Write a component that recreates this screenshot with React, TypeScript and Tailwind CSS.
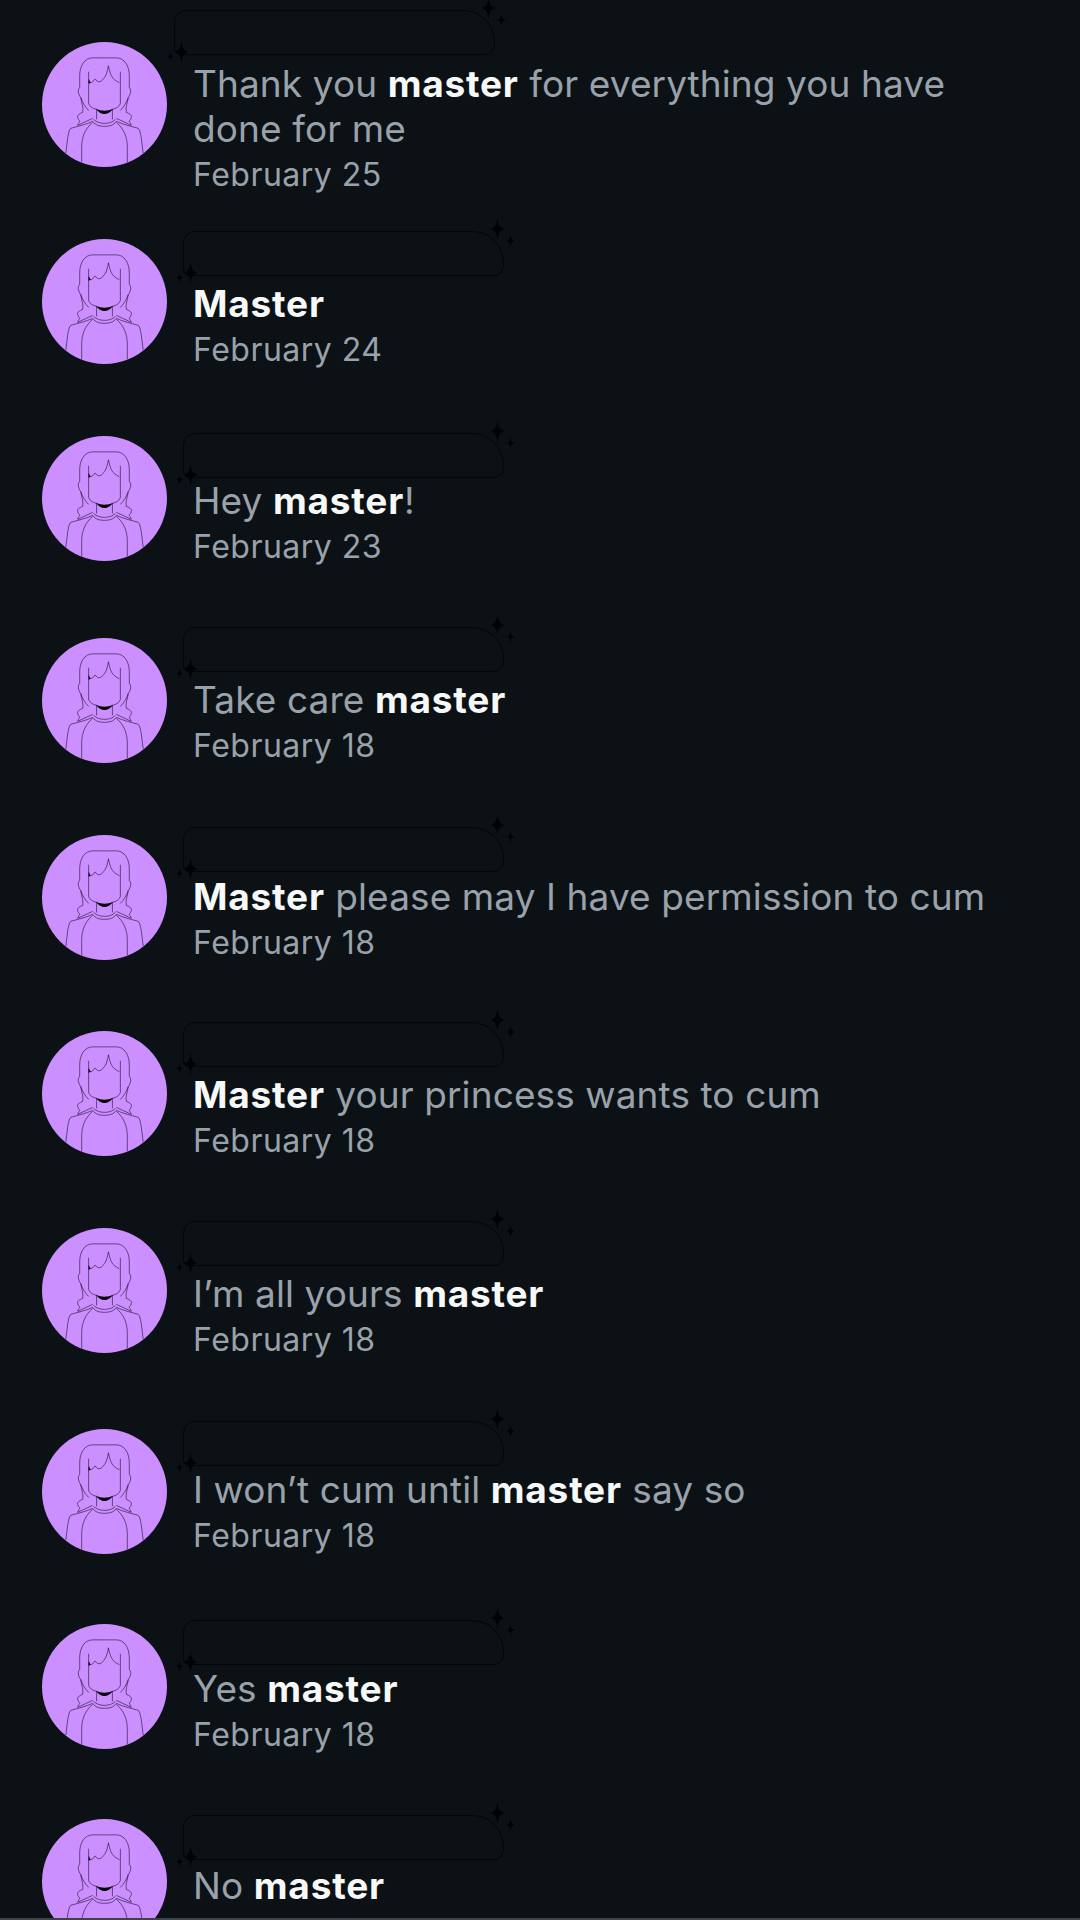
import React from 'react';

type Row = {
  text: React.ReactNode;
  date: string;
  height: string;
  avatar: string;
  bubble: string;
};

const B = ({ children }: { children: React.ReactNode }) => (
  <span className="font-bold tracking-[0.8px] text-[#f7f9f9]">{children}</span>
);

const rows: Row[] = [
  {
    text: (
      <>
        Thank you <B>master</B> for everything you have done for me
      </>
    ),
    date: 'February 25',
    height: 'h-[220px]',
    avatar: '-mt-[19px]',
    bubble: '-top-[51px] -left-[19px]',
  },
  { text: <B>Master</B>, date: 'February 24', height: 'h-[197px]', avatar: '-mt-[42px]', bubble: '-top-[50px] -left-[10px]' },
  {
    text: (
      <>
        Hey <B>master</B>!
      </>
    ),
    date: 'February 23',
    height: 'h-[199px]',
    avatar: '-mt-[42px]',
    bubble: '-top-[45px] -left-[10px]',
  },
  {
    text: (
      <>
        Take care <B>master</B>
      </>
    ),
    date: 'February 18',
    height: 'h-[197px]',
    avatar: '-mt-[39px]',
    bubble: '-top-[50px] -left-[10px]',
  },
  {
    text: (
      <>
        <B>Master</B> please may I have permission to cum
      </>
    ),
    date: 'February 18',
    height: 'h-[198px]',
    avatar: '-mt-[39px]',
    bubble: '-top-[47px] -left-[10px]',
  },
  {
    text: (
      <>
        <B>Master</B> your princess wants to cum
      </>
    ),
    date: 'February 18',
    height: 'h-[199px]',
    avatar: '-mt-[41px]',
    bubble: '-top-[50px] -left-[10px]',
  },
  {
    text: (
      <>
        I’m all yours <B>master</B>
      </>
    ),
    date: 'February 18',
    height: 'h-[196px]',
    avatar: '-mt-[43px]',
    bubble: '-top-[50px] -left-[10px]',
  },
  {
    text: (
      <>
        I won’t cum until <B>master</B> say so
      </>
    ),
    date: 'February 18',
    height: 'h-[199px]',
    avatar: '-mt-[38px]',
    bubble: '-top-[46px] -left-[10px]',
  },
  {
    text: (
      <>
        Yes <B>master</B>
      </>
    ),
    date: 'February 18',
    height: 'h-[197px]',
    avatar: '-mt-[42px]',
    bubble: '-top-[46px] -left-[10px]',
  },
  {
    text: (
      <>
        No <B>master</B>
      </>
    ),
    date: 'February 18',
    height: 'h-[197px]',
    avatar: '-mt-[44px]',
    bubble: '-top-[48px] -left-[10px]',
  },
];

// one half of the figure, mirrored for the other side
const AvatarSide = () => (
  <>
    <path d="M63 16H51C43 16 38 24 38 34V46C36 47 36 52 39 56C40 62 42 66 41 71C38 72 35 74 36 76C36 78 38 79 38 80C37 82 36 83 36 84" />
    <path d="M47 30V62C48 65 51 67 55 68" />
    <path d="M39 56C41 61 43 65 47 69" />
    <path d="M55 68V78" />
    <path d="M36 84L51 77" />
    <path d="M51 80C45 83 36 85 29 87C27 89 27 92 26 96L24 112" />
    <path d="M51 81C44 87 40 95 40 106V122" />
    <path d="M51 80C54 84 58 85 63 85" />
    <path d="M52 78C55 81 59 82 63 82" />
  </>
);

const Avatar = ({ className }: { className: string }) => (
  <div className={`w-[125px] h-[125px] shrink-0 rounded-full bg-[#cc8fff] overflow-hidden ${className}`}>
    <svg viewBox="0 0 126 126" className="w-full h-full" fill="none" stroke="#1c0e2c" strokeWidth="0.6">
      <AvatarSide />
      <g transform="matrix(-1 0 0 1 126 0)">
        <AvatarSide />
      </g>
      <path d="M47 41C49 41 51 41 52 39C53 37 54 37 55 39C57 41 60 40 62 37C65 34 66 29 67 24C68 30 70 35 72 37C74 39 76 40 78 41" />
      <path d="M47 37V42L49 41Z" fill="#000" stroke="none" />
      <path d="M54 67C60 70 66 70 72 67C69 71 66 72.5 63 72.5C60 72.5 57 71 54 67Z" fill="#000" stroke="none" />
    </svg>
  </div>
);

const Sparkle = ({ className }: { className: string }) => (
  <svg viewBox="0 0 14 24" className={`absolute ${className}`} fill="#020304">
    <path d="M7 0C7.6 7 8.5 10.5 14 12C8.5 13.5 7.6 17 7 24C6.4 17 5.5 13.5 0 12C5.5 10.5 6.4 7 7 0Z" />
  </svg>
);

// redacted name pill with its four little stars
const NamePill = ({ className }: { className: string }) => (
  <div className={`absolute w-[321px] h-[45px] ${className}`}>
    <div className="w-full h-full border border-[#040608] rounded-tl-[12px] rounded-tr-[32px] rounded-br-[10px] rounded-bl-[6px]" />
    <Sparkle className="w-[15px] h-[24px] left-[307px] -top-[14px]" />
    <Sparkle className="w-[9px] h-[14px] left-[323px] top-[3px]" />
    <Sparkle className="w-[15px] h-[24px] left-[0px] top-[30px]" />
    <Sparkle className="w-[7px] h-[11px] -left-[7px] top-[41px]" />
  </div>
);

export default function App() {
  return (
    <div className="w-[1080px] h-[1920px] overflow-hidden bg-[#0b1115] pt-[61px] pl-[42px] font-['Inter',sans-serif] relative">
      {rows.map((row, i) => (
        <div key={i} className={`flex items-start gap-[26px] ${row.height}`}>
          <Avatar className={row.avatar} />
          <div className="relative flex-1 pr-[70px]">
            <NamePill className={row.bubble} />
            <div className="text-[37px] leading-[45px] tracking-[0.1px] text-[#99a2ab]">{row.text}</div>
            <div className="mt-[1px] text-[32px] leading-[45px] tracking-[0.5px] text-[#99a2ab]">{row.date}</div>
          </div>
        </div>
      ))}
      <div className="absolute z-10 left-0 right-0 bottom-0 h-[2px] bg-[#3f4347]" />
    </div>
  );
}
